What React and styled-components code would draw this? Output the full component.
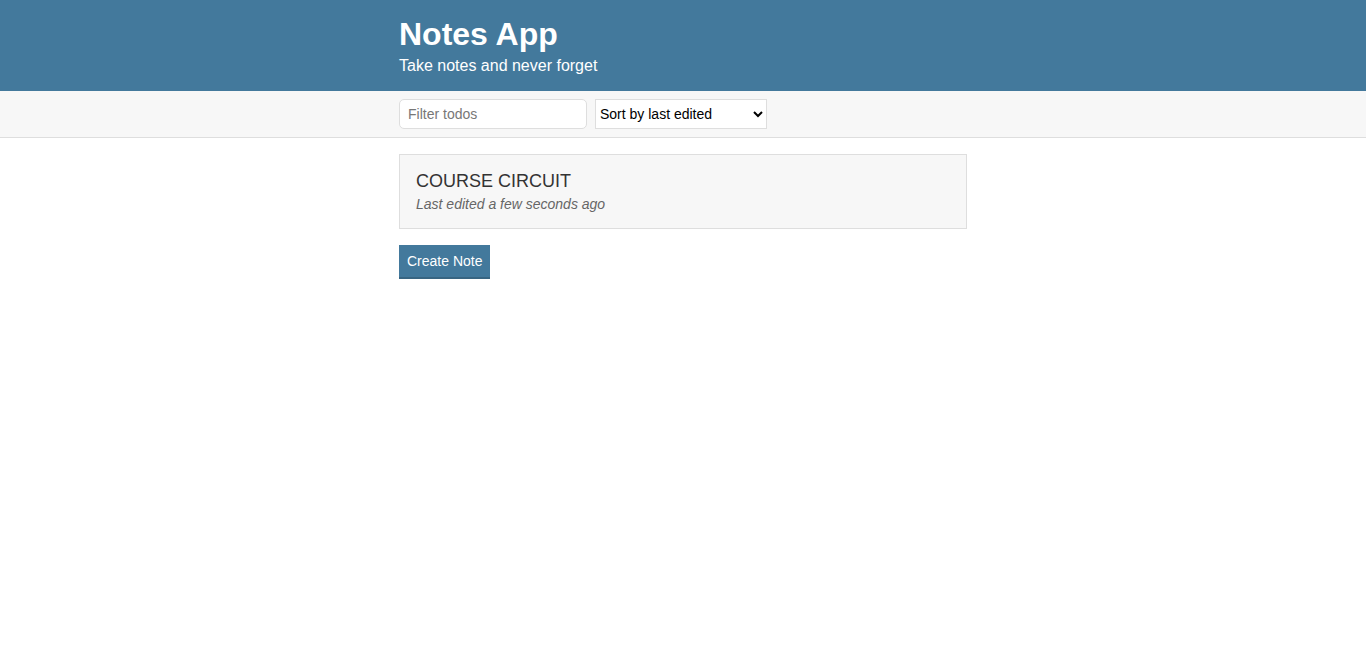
import React from 'react';
import styled, { createGlobalStyle } from 'styled-components';

const GlobalStyle = createGlobalStyle`
  * {
    box-sizing: border-box;
    margin: 0;
    padding: 0;
  }
  body {
    font-family: "Liberation Sans", Arial, sans-serif;
    color: #333333;
    background: #ffffff;
  }
`

const Header = styled.header`
  background: #43799c;
  color: #ffffff;
  padding: 18px 0 17px;
`

const Container = styled.div`
  width: 568px;
  margin: 0 auto;
`

const Title = styled.h1`
  font-size: 32px;
  line-height: 32px;
  font-weight: bold;
  margin-bottom: 8px;
`

const Subtitle = styled.p`
  font-size: 16px;
  line-height: 16px;
`

const Actions = styled.div`
  background: #f7f7f7;
  border-bottom: 1px solid #dedede;
  padding: 8px 0;
`

const ActionsRow = styled.div`
  display: flex;
  gap: 8px;
`

const FilterInput = styled.input`
  width: 188px;
  height: 30px;
  border: 1px solid #dedede;
  border-radius: 5px;
  padding: 0 8px;
  font-family: "Liberation Sans", Arial, sans-serif;
  font-size: 14px;
  color: #333;
  outline: none;
  &::placeholder {
    color: #777777;
  }
`

const SortSelect = styled.select`
  width: 172px;
  height: 30px;
  border: 1px solid #dedede;
  border-radius: 0;
  background: #ffffff;
  padding: 0;
  font-family: "Liberation Sans", Arial, sans-serif;
  font-size: 14px;
  color: #000;
`

const Main = styled.main`
  padding-top: 16px;
`

const NoteCard = styled.a`
  display: block;
  background: #f7f7f7;
  border: 1px solid #dedede;
  padding: 16px;
  text-decoration: none;
  color: #333333;
  margin-bottom: 16px;
`

const NoteTitle = styled.p`
  font-size: 18px;
  line-height: 20px;
  margin-bottom: 5px;
`

const NoteMeta = styled.p`
  font-size: 14px;
  line-height: 16px;
  font-style: italic;
  color: #666666;
`

const Button = styled.button`
  background: #43799c;
  border: none;
  border-bottom: 2px solid #386582;
  color: #ffffff;
  font-family: "Liberation Sans", Arial, sans-serif;
  font-size: 14px;
  line-height: 16px;
  padding: 8px;
  cursor: pointer;
`

export default function App() {
  const notes = [{ id: 1, title: 'COURSE CIRCUIT', edited: 'Last edited a few seconds ago' }]

  return (
    <>
      <GlobalStyle />
      <Header>
        <Container>
          <Title>Notes App</Title>
          <Subtitle>Take notes and never forget</Subtitle>
        </Container>
      </Header>
      <Actions>
        <Container>
          <ActionsRow>
            <FilterInput placeholder="Filter todos" />
            <SortSelect defaultValue="byEdited">
              <option value="byEdited">Sort by last edited</option>
              <option value="byCreated">Sort by recently created</option>
              <option value="alphabetical">Sort alphabetically</option>
            </SortSelect>
          </ActionsRow>
        </Container>
      </Actions>
      <Main>
        <Container>
          {notes.map((note) => (
            <NoteCard key={note.id} href="#">
              <NoteTitle>{note.title}</NoteTitle>
              <NoteMeta>{note.edited}</NoteMeta>
            </NoteCard>
          ))}
          <Button>Create Note</Button>
        </Container>
      </Main>
    </>
  )
}
